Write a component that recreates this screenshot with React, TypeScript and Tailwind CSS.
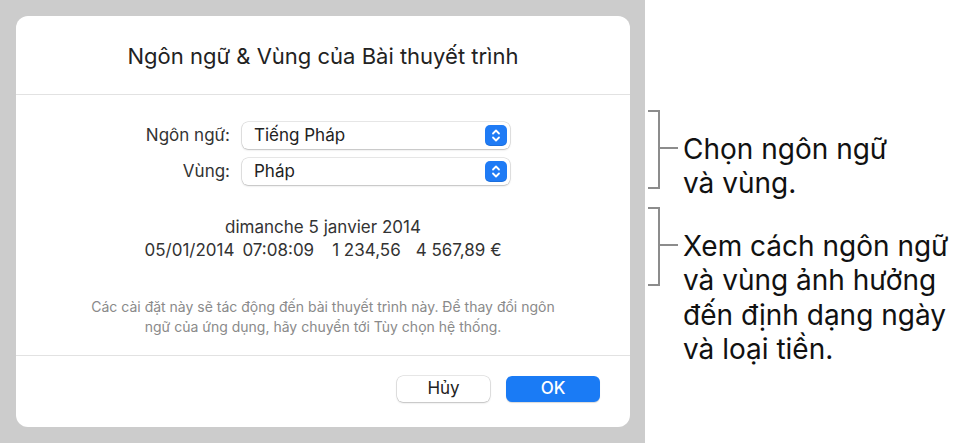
import { ReactNode } from 'react';

const font = { fontFamily: 'Inter, "Noto Sans", "Liberation Sans", sans-serif' };

function Stepper() {
  return (
    <div className="flex h-[21px] w-[22px] items-center justify-center rounded-[5px] bg-[#1f7bf5] shadow-[inset_0_-1px_0_rgba(0,0,0,0.1)]">
      <svg width="10" height="15" viewBox="0 0 10 15" fill="none" stroke="white" strokeWidth="1.8" strokeLinecap="round" strokeLinejoin="round">
        <path d="M2 5.5 L5 2.5 L8 5.5" />
        <path d="M2 9.5 L5 12.5 L8 9.5" />
      </svg>
    </div>
  );
}

function PopupRow({ label, value }: { label: string; value: string }) {
  return (
    <div className="flex items-center">
      <div className="w-[214px] text-right text-[17px] text-[#333]">{label}</div>
      <div className="ml-[12px] flex h-[27px] w-[268px] items-center justify-between rounded-[6px] bg-white pl-[12px] pr-[3px] shadow-[0_0_0_0.5px_rgba(0,0,0,0.18),0_1px_2px_rgba(0,0,0,0.18)]">
        <span className="text-[17px] text-[#222]">{value}</span>
        <Stepper />
      </div>
    </div>
  );
}

function Bracket() {
  return (
    <svg width="32" height="79" viewBox="0 0 32 79" fill="none" stroke="#8c8c8c" strokeWidth="2" className="shrink-0">
      <path d="M0 1 H11 V78 H0" />
      <path d="M11 38 H30" />
    </svg>
  );
}

function Note({ children }: { children: ReactNode }) {
  return (
    <div className="flex items-start">
      <Bracket />
      <div className="ml-[3px] mt-[22px] text-[28px] leading-[34.4px] text-[#111]">{children}</div>
    </div>
  );
}

export default function App() {
  return (
    <div className="flex h-[443px] w-[959px] bg-white" style={font}>
      {/* Dialog area */}
      <div className="h-[443px] w-[645px] shrink-0 bg-[#cccccc] pl-4 pt-4">
        <div className="flex h-[411px] w-[614px] flex-col rounded-[12px] bg-white">
          <div className="flex h-[78px] items-center justify-center pt-[2px] text-[22px] text-[#222]">
            Ngôn ngữ &amp; Vùng của Bài thuyết trình
          </div>
          <div className="h-px bg-[#e2e2e2]" />

          <div className="flex flex-col gap-[9px] pt-[27px]">
            <PopupRow label="Ngôn ngữ:" value="Tiếng Pháp" />
            <PopupRow label="Vùng:" value="Pháp" />
          </div>

          <div className="mt-[31px] text-center text-[17px] leading-[23px] text-[#333]">
            <div>dimanche 5 janvier 2014</div>
            <div className="flex justify-center">
              <span>05/01/2014</span>
              <span className="ml-[8px]">07:08:09</span>
              <span className="ml-[18px]">1 234,56</span>
              <span className="ml-[15px]">4 567,89 €</span>
            </div>
          </div>

          <div className="mt-[35px] text-center text-[14px] leading-[20px] text-[#8a8a8a]">
            Các cài đặt này sẽ tác động đến bài thuyết trình này. Để thay đổi ngôn
            <br />
            ngữ của ứng dụng, hãy chuyển tới Tùy chọn hệ thống.
          </div>

          <div className="mt-[18px] h-px bg-[#e2e2e2]" />

          <div className="flex justify-end gap-[16px] pr-[30px] pt-[20px]">
            <button className="h-[26px] w-[93px] rounded-[6px] bg-white text-[17px] text-[#222] shadow-[0_0_0_0.5px_rgba(0,0,0,0.18),0_1px_2px_rgba(0,0,0,0.18)]">
              Hủy
            </button>
            <button className="h-[26px] w-[94px] rounded-[6px] bg-[#1a7bf5] text-[17px] font-medium text-white shadow-[0_1px_1px_rgba(0,0,0,0.15)]">
              OK
            </button>
          </div>
        </div>
      </div>

      {/* Annotations */}
      <div className="flex flex-col gap-[6px] pl-[3px] pt-[110px]">
        <Note>
          Chọn ngôn ngữ
          <br />
          và vùng.
        </Note>
        <Note>
          Xem cách ngôn ngữ
          <br />
          và vùng ảnh hưởng
          <br />
          đến định dạng ngày
          <br />
          và loại tiền.
        </Note>
      </div>
    </div>
  );
}
